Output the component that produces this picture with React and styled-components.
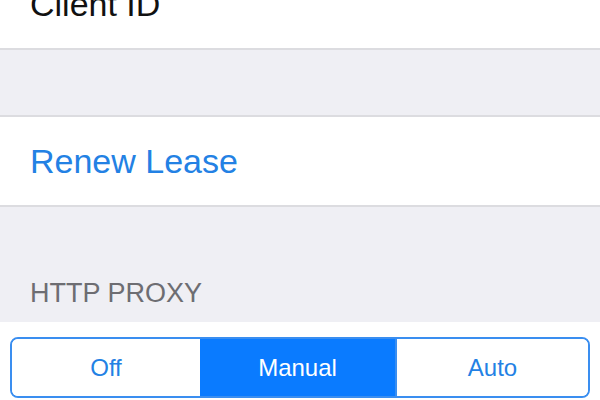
import React from 'react'
import styled, { createGlobalStyle } from 'styled-components'

const GlobalStyle = createGlobalStyle`
  html, body {
    margin: 0;
    padding: 0;
    background: #efeff4;
    overflow: hidden;
  }
  body {
    font-family: 'Liberation Sans', Arial, sans-serif;
    -webkit-font-smoothing: antialiased;
  }
`

const Page = styled.div`
  width: 600px;
  height: 400px;
  overflow: hidden;
  background: #efeff4;
`

const Scroller = styled.div`
  margin-top: -40px;
`

const Cell = styled.div`
  height: 88px;
  display: flex;
  align-items: center;
  padding-left: 30px;
  background: #fff;
  border-bottom: 2px solid #dcdce0;
  border-top: ${(p) => (p.topLine ? '2px solid #dcdce0' : 'none')};
  font-size: 34px;
  color: ${(p) => (p.action ? '#2381e4' : '#111')};
`

const Spacer = styled.div`
  height: 65px;
`

const SectionHeader = styled.div`
  height: 115px;
  display: flex;
  align-items: flex-end;
  box-sizing: border-box;
  padding: 0 0 13px 30px;
  font-size: 27px;
  color: #6d6d72;
`

const ControlRow = styled.div`
  background: #fff;
  padding: 15px 10px 20px;
`

const Segmented = styled.div`
  display: flex;
  height: 61px;
  box-sizing: border-box;
  border: 2px solid #3a8ef0;
  border-radius: 8px;
  overflow: hidden;
`

const Segment = styled.div`
  flex: ${(p) => p.grow};
  display: flex;
  align-items: center;
  justify-content: center;
  font-size: 24px;
  color: ${(p) => (p.active ? '#fff' : '#2381e4')};
  background: ${(p) => (p.active ? '#0a7bff' : '#fff')};
  border-left: ${(p) => (p.divider ? '2px solid #3a8ef0' : 'none')};
`

const App = () => (
  <Page>
    <GlobalStyle />
    <Scroller>
      <Cell>Client ID</Cell>
      <Spacer />
      <Cell action topLine>
        Renew Lease
      </Cell>
      <SectionHeader>HTTP PROXY</SectionHeader>
      <ControlRow>
        <Segmented>
          <Segment grow={190}>Off</Segment>
          <Segment grow={197} active>
            Manual
          </Segment>
          <Segment grow={193} divider>
            Auto
          </Segment>
        </Segmented>
      </ControlRow>
    </Scroller>
  </Page>
)

export default App
